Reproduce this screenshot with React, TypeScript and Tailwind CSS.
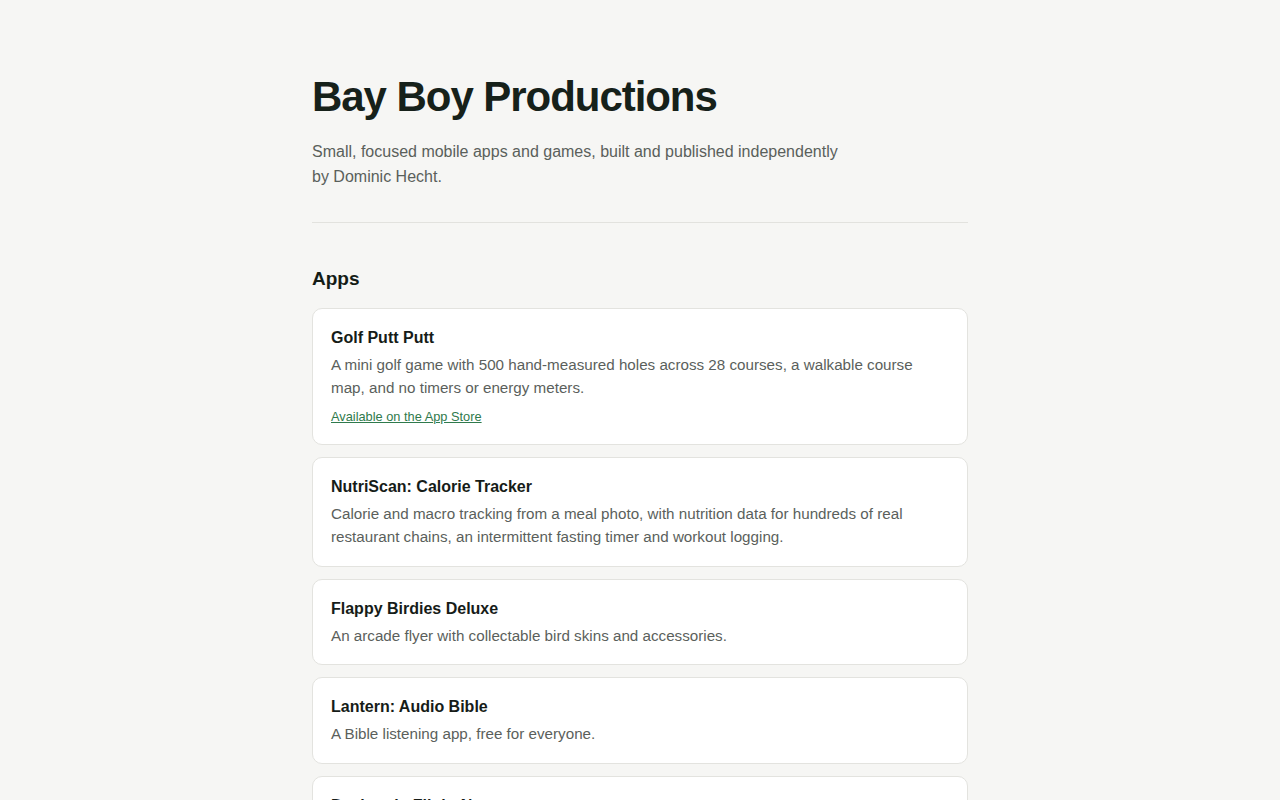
import React from "react";

const apps = [
  {
    title: "Golf Putt Putt",
    desc: "A mini golf game with 500 hand-measured holes across 28 courses, a walkable course map, and no timers or energy meters.",
    link: "Available on the App Store",
  },
  {
    title: "NutriScan: Calorie Tracker",
    desc: "Calorie and macro tracking from a meal photo, with nutrition data for hundreds of real restaurant chains, an intermittent fasting timer and workout logging.",
  },
  {
    title: "Flappy Birdies Deluxe",
    desc: "An arcade flyer with collectable bird skins and accessories.",
  },
  {
    title: "Lantern: Audio Bible",
    desc: "A Bible listening app, free for everyone.",
  },
  {
    title: "Daybreak: Flight Notes",
    desc: "A simple flight logbook for pilots.",
  },
];

export default function App() {
  return (
    <div
      className="min-h-screen bg-[#f6f6f4] text-[#141c16]"
      style={{ fontFamily: '"Liberation Sans", Arial, sans-serif' }}
    >
      <div className="mx-auto w-[656px] pt-[72px] pb-16">
        <h1 className="text-[42px] leading-[50px] font-bold tracking-[-0.025em] text-[#16211a]">
          Bay Boy Productions
        </h1>
        <p className="mt-[17px] max-w-[34rem] text-[16px] leading-[25px] text-[#5a605b]">
          Small, focused mobile apps and games, built and published independently by Dominic Hecht.
        </p>
        <hr className="mt-[33px] border-0 border-t border-[#e2e2de]" />
        <h2 className="mt-[44px] text-[19px] leading-[24px] font-bold text-[#141c16]">Apps</h2>
        <div className="mt-[17px] flex flex-col gap-3">
          {apps.map((a) => (
            <div
              key={a.title}
              className="rounded-[10px] border border-[#e3e3df] bg-white px-[18px] pt-[19px] pb-[17px]"
            >
              <h3 className="text-[16px] leading-[20.8px] font-bold text-[#161c18]">{a.title}</h3>
              <p className="mt-[4px] text-[15.2px] leading-[23.56px] text-[#5b5f5c]">{a.desc}</p>
              {a.link && (
                <a
                  href="#"
                  className="mt-[8px] mb-[1px] block text-[12.8px] leading-[18px] text-[#2f7a4c] underline w-fit"
                >
                  {a.link}
                </a>
              )}
            </div>
          ))}
        </div>
      </div>
    </div>
  );
}
